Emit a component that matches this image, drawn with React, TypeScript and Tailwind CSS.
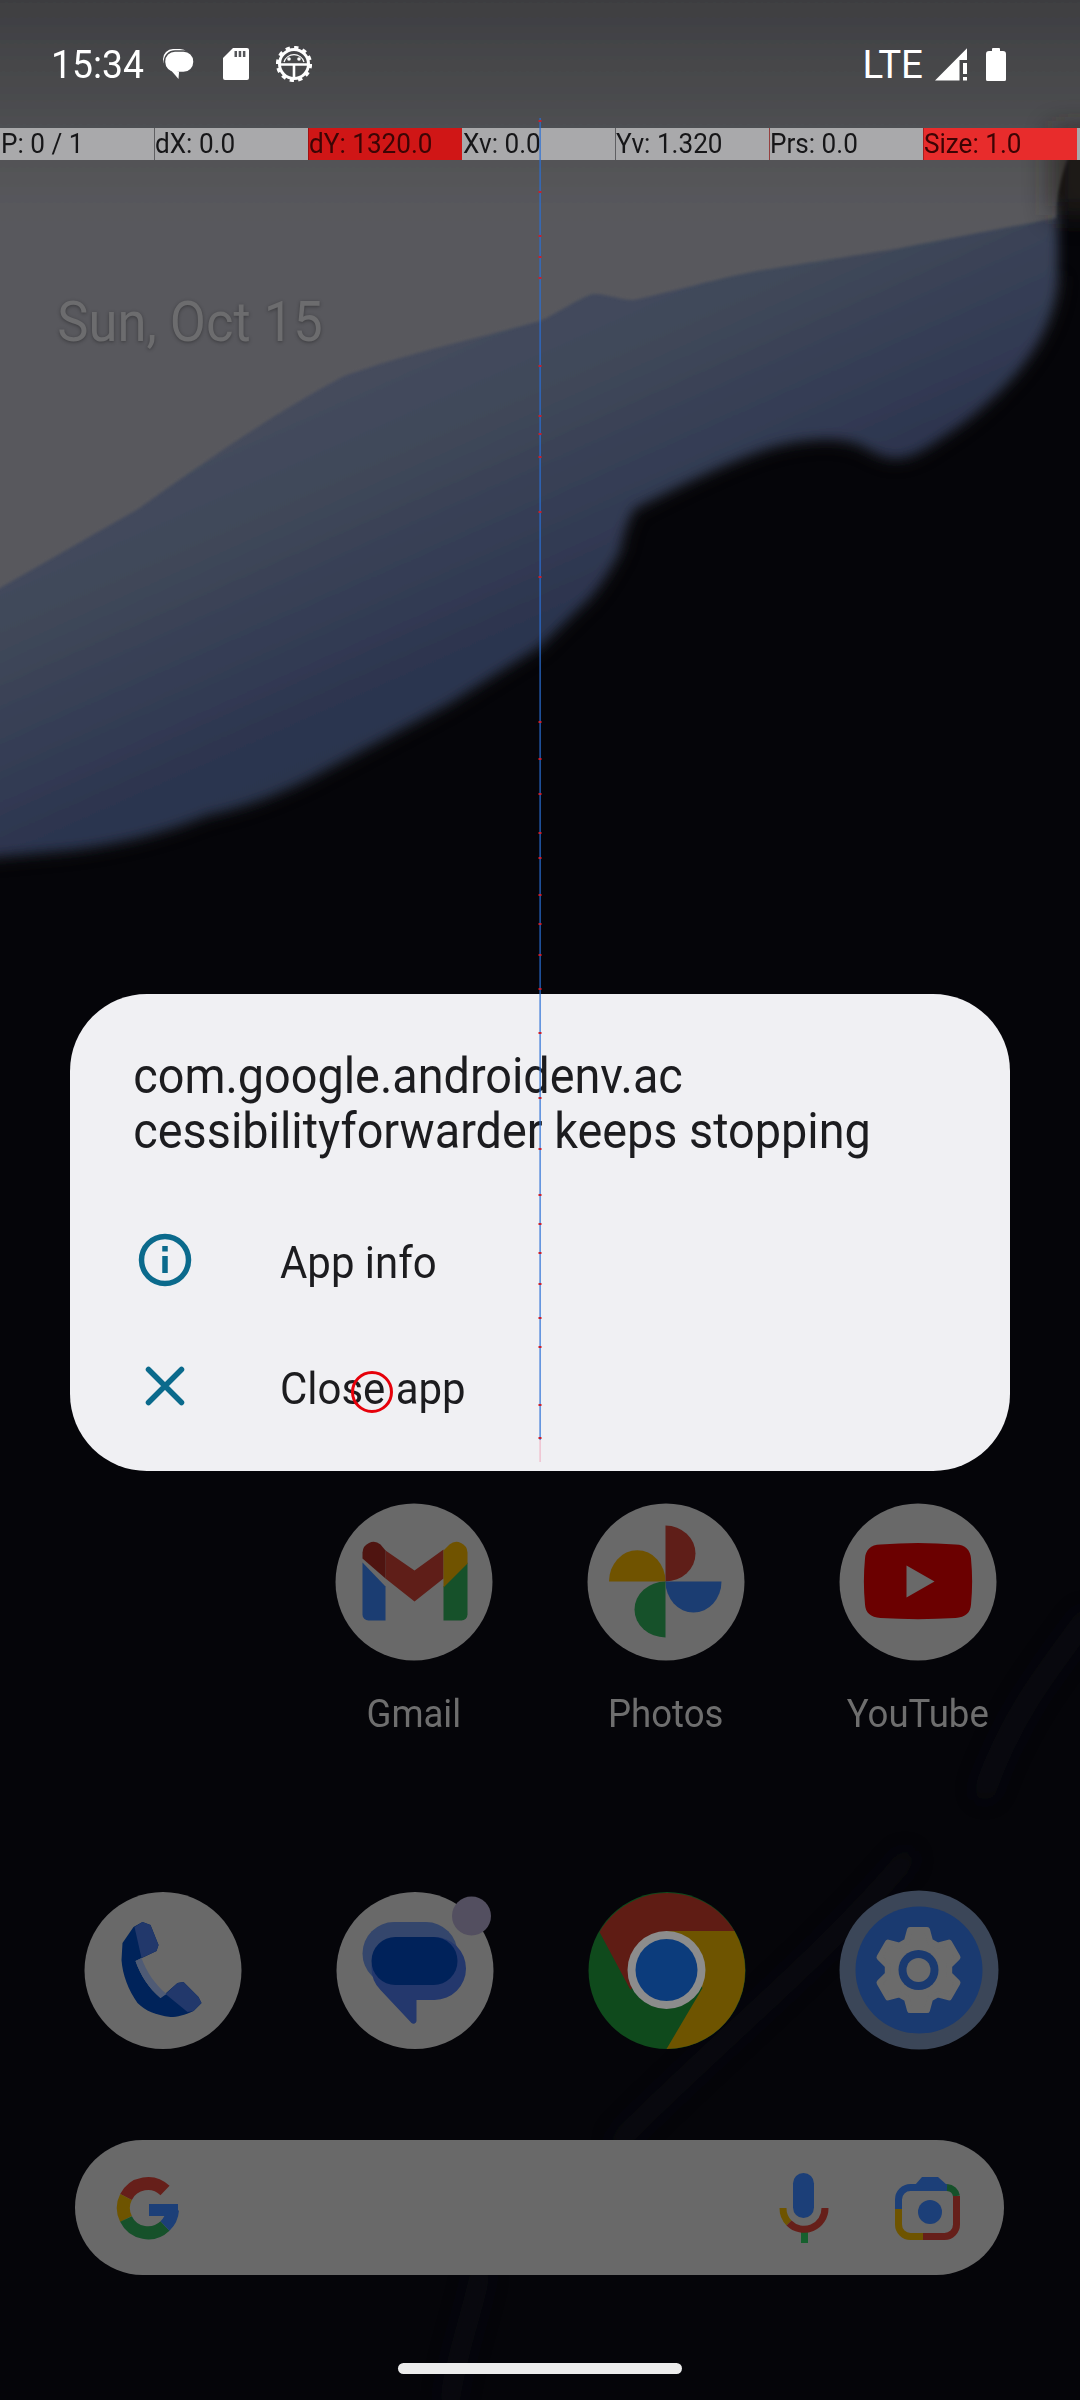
import React from "react";

const bar = [
  { t: "P: 0 / 1", c: "bg-[#a9a9ab]", line: "border-[#a9a9ab]", txt: "text-[#161618]" },
  { t: "dX: 0.0", c: "bg-[#a9a9ab]", line: "border-[#5f5f62]", txt: "text-[#161618]" },
  { t: "dY: 1320.0", c: "bg-[#d01616]", line: "border-[#a01010]", txt: "text-[#3c0505]" },
  { t: "Xv: 0.0", c: "bg-[#a9a9ab]", line: "border-[#a9a9ab]", txt: "text-[#161618]" },
  { t: "Yv: 1.320", c: "bg-[#a9a9ab]", line: "border-[#5f5f62]", txt: "text-[#161618]" },
  { t: "Prs: 0.0", c: "bg-[#a9a9ab]", line: "border-[#96403f]", txt: "text-[#161618]" },
  { t: "Size: 1.0", c: "bg-[#e82c2c]", line: "border-[#a82020]", txt: "text-[#3c0404]" },
];

const ticks = [
  120, 191, 235, 256, 277, 365, 415, 433, 456, 511, 576, 721, 758, 793, 832, 857, 894, 923, 954, 988,
  1032, 1097, 1148, 1194, 1223, 1252, 1283, 1317, 1346, 1404, 1437,
];

function gearPath(cx: number, cy: number, ro: number, ri: number, a1: number, a2: number) {
  let d = "";
  for (let k = 0; k < 6; k++) {
    const a = ((k * 60 - 90) * Math.PI) / 180;
    const p = (r: number, da: number) => {
      const t = a + (da * Math.PI) / 180;
      return `${(cx + r * Math.cos(t)).toFixed(1)} ${(cy + r * Math.sin(t)).toFixed(1)}`;
    };
    d += `${k === 0 ? "M" : "L"}${p(ri, -a2)} L${p(ro, -a1)} L${p(ro, a1)} L${p(ri, a2)} `;
  }
  return d + "Z";
}

function Wallpaper() {
  const region = { filterUnits: "userSpaceOnUse" as const, x: -100, y: -100, width: 1300, height: 2600 };
  const lower =
    "C1056 330 1020 380 960 425 C930 445 915 458 895 458 C880 458 870 448 855 443 C835 437 810 438 780 445 C750 452 690 480 634 509 C625 525 622 540 620 551 C605 580 590 600 578 609 L540 646 L448 704 L310 778 C270 798 240 808 207 815 C160 835 110 845 69 850 L-20 858";
  return (
    <svg className="absolute inset-0" width="1080" height="2400" viewBox="0 0 1080 2400">
      <defs>
        <linearGradient id="sky" gradientUnits="userSpaceOnUse" x1="0" y1="0" x2="0" y2="260">
          <stop offset="0" stopColor="#3e3e41" />
          <stop offset="0.5" stopColor="#4e4f52" />
          <stop offset="0.8" stopColor="#58585c" />
          <stop offset="1" stopColor="#59595d" />
        </linearGradient>
        <linearGradient id="blue" gradientUnits="userSpaceOnUse" x1="500" y1="200" x2="684" y2="611">
          <stop offset="0" stopColor="#4a5060" />
          <stop offset="0.45" stopColor="#3f4759" />
          <stop offset="0.85" stopColor="#2d3650" />
          <stop offset="1" stopColor="#2a344e" />
        </linearGradient>
        <filter id="b2" {...region}><feGaussianBlur stdDeviation="1.5" /></filter>
        <filter id="b6" {...region}><feGaussianBlur stdDeviation="6" /></filter>
        <filter id="b8" {...region}><feGaussianBlur stdDeviation="8" /></filter>
        <filter id="b10" {...region}><feGaussianBlur stdDeviation="10" /></filter>
        <filter id="b14" {...region}><feGaussianBlur stdDeviation="14" /></filter>
      </defs>
      <rect width="1080" height="2400" fill="#050509" />
      <path
        d={`M1058 276 ${lower}`}
        fill="none"
        stroke="#2a2620"
        strokeWidth="12"
        filter="url(#b8)"
        opacity="0.3"
      />
      <path d={`M-20 200 H1058 V276 ${lower} Z`} fill="url(#blue)" filter="url(#b6)" />
      <path
        d="M-20 -20 H1100 V110 C1075 135 1058 170 1056 218 L895 249 L757 271 C720 278 670 292 634 300 C620 300 605 293 592 294 C575 300 560 312 540 321 C470 340 400 355 344 376 C270 415 200 465 138 509 L0 588 L-20 600 Z"
        fill="url(#sky)"
        filter="url(#b2)"
      />
      <path d="M1052 130 H1120 V215 H1052 Z" fill="#26241f" filter="url(#b14)" opacity="0.75" />
      <g fill="none" stroke="#0a0f1e" strokeLinecap="round" filter="url(#b10)" opacity="0.4">
        <path d="M1085 1620 C1040 1680 1010 1720 985 1790" strokeWidth="22" />
        <path d="M905 1860 C830 1950 720 2040 620 2140" strokeWidth="20" />
        <path d="M480 2275 C470 2320 455 2360 450 2400" strokeWidth="20" />
      </g>
    </svg>
  );
}

function MsgIcon() {
  return (
    <svg width="32" height="32" viewBox="161 50 32 32">
      <rect x="162" y="51" width="27" height="20" rx="10" fill="#ffffff" />
      <rect x="163.5" y="53" width="29.5" height="21.5" rx="10.5" fill="#ffffff" stroke="#47484b" strokeWidth="1.5" />
      <path d="M168 70 L177.5 81 L178 74 Z" fill="#ffffff" />
    </svg>
  );
}

function SdIcon() {
  return (
    <svg width="26" height="32" viewBox="222 49 26 32">
      <path d="M232 49 H246 a2 2 0 0 1 2 2 V79 a2 2 0 0 1 -2 2 H224 a2 2 0 0 1 -2 -2 V59 Z" fill="#ffffff" />
      <path d="M233.5 52 h2.5 v6 h-2.5 Z M237.7 52 h2.5 v6 h-2.5 Z M241.9 52 h2.5 v6 h-2.5 Z" fill="#55565a" />
    </svg>
  );
}

function BugGear() {
  return (
    <svg width="36" height="36" viewBox="275 47 36 36">
      <circle cx="293" cy="65" r="14.5" fill="none" stroke="#ffffff" strokeWidth="3" />
      <circle cx="293" cy="65" r="16.5" fill="none" stroke="#ffffff" strokeWidth="3.2" strokeDasharray="4.3 4.3" />
      <path d="M279 65.5 H307 M293 65.5 V80" stroke="#ffffff" strokeWidth="2.6" fill="none" />
      <path d="M283 63 A10.5 10.5 0 0 1 303 63" fill="none" stroke="#ffffff" strokeWidth="1.2" />
      <circle cx="288" cy="60" r="1.8" fill="#ffffff" />
      <circle cx="298" cy="60" r="1.8" fill="#ffffff" />
    </svg>
  );
}

function Signal() {
  return (
    <svg width="33" height="33" viewBox="935 47 33 33">
      <path d="M935 79.5 L967 47.3 V59 H959.5 V79.5 Z" fill="#ffffff" />
      <path d="M963 62 h4 v11 h-4 Z M963 76 h4 v3.5 h-4 Z" fill="#ffffff" />
    </svg>
  );
}

function Battery() {
  return (
    <svg width="20" height="33" viewBox="986 47 20 33">
      <path d="M992 50 V48 a1 1 0 0 1 1 -1 h6 a1 1 0 0 1 1 1 V50 H1003 a3 3 0 0 1 3 3 V78.5 a1.5 1.5 0 0 1 -1.5 1.5 H987.5 a1.5 1.5 0 0 1 -1.5 -1.5 V53 a3 3 0 0 1 3 -3 Z" fill="#ffffff" />
    </svg>
  );
}

function Circle({ cx, cy }: { cx: number; cy: number }) {
  return <circle cx={cx} cy={cy} r="78.5" fill="#696969" />;
}

function Gmail() {
  return (
    <svg width="160" height="160" viewBox="333.5 1501.5 160 160">
      <Circle cx={413.5} cy={1581.5} />
      <path d="M362 1562 L385 1586 V1620 H368 a6 6 0 0 1 -6 -6 Z" fill="#1b3d72" />
      <path d="M467 1562 L443 1586 V1620 H461 a6 6 0 0 0 6 -6 Z" fill="#16512a" />
      <path d="M385 1550 L414 1570 L443 1549 V1578 L414 1601 L385 1578 Z" fill="#5f1e18" />
      <path d="M362 1552 a11 11 0 0 1 18 -8 L385 1550 V1578 L362 1558 Z" fill="#4f1410" />
      <path d="M443 1550 L449 1544 a11 11 0 0 1 18 8 V1563 L443 1587 Z" fill="#705300" />
    </svg>
  );
}

function Photos() {
  return (
    <svg width="160" height="160" viewBox="585.5 1501.5 160 160">
      <Circle cx={665.5} cy={1581.5} />
      <path d="M665 1525 A30 28 0 0 1 665 1581 Z" fill="#5f1e18" />
      <path d="M608.5 1581 A28 31 0 0 1 665 1581 Z" fill="#705300" />
      <path d="M665 1581 H721 A28 31 0 0 1 665 1581 Z" fill="#1b3d72" />
      <path d="M665 1581 V1637 A31 28 0 0 1 665 1581 Z" fill="#16512a" />
    </svg>
  );
}

function YouTube() {
  return (
    <svg width="160" height="160" viewBox="837.5 1501.5 160 160">
      <Circle cx={917.5} cy={1581.5} />
      <path d="M880 1544 C905 1542 930 1542 955 1544 C965 1544 970 1550 970.5 1558 C972 1574 972 1588 970.5 1604 C970 1612 965 1617 955 1617.5 C930 1619 905 1619 880 1617.5 C870 1617 865 1612 864.5 1604 C863 1588 863 1574 864.5 1558 C865 1550 870 1544 880 1544 Z" fill="#6b0000" />
      <path d="M906 1565 L934 1581 L906 1597 Z" fill="#696969" />
    </svg>
  );
}

function Phone() {
  return (
    <svg width="160" height="160" viewBox="82.5 1890 160 160">
      <circle cx="162.5" cy="1970.5" r="78.5" fill="#696969" />
      <path d="M133 1927 L142 1922 L150 1925 L158 1945 L156 1951 L135 1961 C140 1975 148 1988 160 1998 L177 1983 L183 1982 L198 1997 L201 2003 L193 2011 C184 2015 177 2017 170 2017 C155 2015 145 2011 137 2003 C128 1990 122 1975 121 1960 L122 1943 Z" fill="#00235a" />
      <path d="M134 1927 L142 1922 L150 1925 L158 1945 L156 1951 L141 1958 Z" fill="#22386b" />
      <path d="M165 1994 L177 1983 L183 1982 L198 1997 L201 2003 L193 2011 L187 2012 Z" fill="#22386b" />
      <path d="M135 1961 L141 1958 C146 1972 155 1985 166 1994 L160 1998 C148 1988 140 1975 135 1961 Z" fill="#4f5b75" />
    </svg>
  );
}

function Messages() {
  return (
    <svg width="160" height="160" viewBox="334.5 1890 160 160" className="overflow-visible">
      <circle cx="414.5" cy="1970.5" r="78.5" fill="#696969" />
      <rect x="362" y="1922" width="95" height="63" rx="31.5" fill="#34466c" />
      <path d="M402 1937 H434 A31.5 31.5 0 0 1 434 2000 H416 V2021 a3 3 0 0 1 -5 2 L380 1990 A31 31 0 0 1 371 1968 A31 31 0 0 1 402 1937 Z" fill="#24386d" />
      <path d="M395 1937 H433 A24 24 0 0 1 457 1961 A24 24 0 0 1 433 1985 H395 A24 24 0 0 1 395 1937 Z" fill="#00225a" />
      <circle cx="471" cy="1916" r="19.5" fill="#534f60" />
    </svg>
  );
}

function Chrome() {
  return (
    <svg width="160" height="160" viewBox="586.5 1890 160 160">
      <circle cx="666.5" cy="1970.5" r="78.5" fill="#0f4a1c" />
      <path d="M599 1932 A78.5 78.5 0 0 1 734 1931 L666 1931 L630 1990 Z" fill="#5f1c14" />
      <path d="M734 1931 A78.5 78.5 0 0 1 666 2049 L702 1988 L666 1931 Z" fill="#6e5400" />
      <circle cx="666" cy="1970" r="39" fill="#8c8c8c" />
      <circle cx="666" cy="1970" r="31" fill="#0c3c7c" />
    </svg>
  );
}

function Settings() {
  return (
    <svg width="160" height="160" viewBox="838.5 1890 160 160">
      <circle cx="918.5" cy="1970" r="79.5" fill="#3b4658" />
      <circle cx="918.5" cy="1970" r="63.5" fill="#1a3a70" />
      <path d={gearPath(918, 1970, 41, 31, 12, 22)} fill="#6b6b6b" stroke="#6b6b6b" strokeWidth="6" strokeLinejoin="round" />
      <circle cx="918" cy="1970" r="20" fill="#1a3a70" />
      <circle cx="918" cy="1970" r="12" fill="#6b6b6b" />
    </svg>
  );
}

function GoogleG() {
  return (
    <svg width="68" height="68" viewBox="114 2172 68 68" fill="none" strokeWidth="13">
      <path d="M165 2188.5 A24.5 24.5 0 0 0 126 2195" stroke="#661f1a" />
      <path d="M126 2195 A24.5 24.5 0 0 0 126 2217" stroke="#6e5400" />
      <path d="M126 2217 A24.5 24.5 0 0 0 165 2224" stroke="#16512a" />
      <path d="M165 2224 A24.5 24.5 0 0 0 172.5 2208" stroke="#1c3f78" />
      <rect x="149" y="2202" width="29" height="12" fill="#1c3f78" stroke="none" />
    </svg>
  );
}

function Mic() {
  return (
    <svg width="56" height="76" viewBox="776 2170 56 76" fill="none">
      <rect x="793" y="2173" width="21" height="45" rx="10.5" fill="#1c3f78" />
      <rect x="801" y="2232" width="7" height="11" fill="#16602e" />
      <path d="M783 2208 A21 21 0 0 0 789 2223" stroke="#6e5400" strokeWidth="7" />
      <path d="M789 2223 A21 21 0 0 0 825 2208" stroke="#661f1a" strokeWidth="7" />
    </svg>
  );
}

function Lens() {
  return (
    <svg width="72" height="70" viewBox="892 2172 72 70" fill="none" strokeWidth="7">
      <path d="M915 2184 L922 2176 H938 L947 2184 V2188 H915 Z" fill="#1c3f78" />
      <path d="M898.5 2208 V2198.5 A12 12 0 0 1 910.5 2186.5 H947" stroke="#1c3f78" />
      <path d="M947 2186.5 A10 10 0 0 1 956.5 2195" stroke="#16512a" />
      <path d="M956.5 2195 V2223.5 A12 12 0 0 1 944.5 2235.5 H923" stroke="#661f1a" />
      <path d="M923 2235.5 H910.5 A12 12 0 0 1 898.5 2223.5 V2208" stroke="#6e5400" />
      <circle cx="930" cy="2211" r="12" fill="#1c3f78" />
    </svg>
  );
}

function InfoIcon() {
  return (
    <svg width="66" height="66" viewBox="0 0 66 66" fill="none" stroke="#0b6a8c">
      <circle cx="33" cy="33" r="23.5" strokeWidth="5.5" />
      <path d="M33 29 V46" strokeWidth="5.5" />
      <path d="M33 19 V24.5" strokeWidth="5.5" />
    </svg>
  );
}

function CloseIcon() {
  return (
    <svg width="66" height="66" viewBox="0 0 66 66" fill="none" stroke="#0b6a8c">
      <path d="M16.5 16.5 L49.5 49.5 M49.5 16.5 L16.5 49.5" strokeWidth="5.5" strokeLinecap="round" />
    </svg>
  );
}

export default function App() {
  return (
    <div className="relative w-[1080px] h-[2400px] overflow-hidden bg-[#050509] font-['Roboto',sans-serif]">
      <Wallpaper />

      <div className="relative flex flex-col h-full">
        <div className="h-[128px] flex items-center pl-[51px] pr-[74px] text-white">
          <span className="text-[38.5px] leading-none w-[111px] pt-[2px] origin-left scale-x-[0.97]">15:34</span>
          <MsgIcon />
          <div className="ml-[29px]"><SdIcon /></div>
          <div className="ml-[27px]"><BugGear /></div>
          <span className="ml-auto text-[38.5px] leading-none pt-[3px]">LTE</span>
          <div className="ml-[12px]"><Signal /></div>
          <div className="ml-[18px]"><Battery /></div>
        </div>

        <div className="flex h-[32px] bg-[#a9a9ab]">
          {bar.map((b) => (
            <div
              key={b.t}
              className={`w-[153.86px] border-l text-[27.5px] leading-[32px] whitespace-nowrap overflow-hidden ${b.c} ${b.line} ${b.txt}`}
            >
              <span className="block origin-left scale-x-[0.95]">{b.t}</span>
            </div>
          ))}
        </div>

        <div className="mt-[134px] pl-[60px] text-[55px] leading-[56px] text-[#6c6c6e] [text-shadow:0_1px_4px_rgba(0,0,0,0.35)] origin-left scale-x-[0.955]">
          Sun, Oct 15
        </div>

        <div className="mt-auto">
          <div className="grid grid-cols-[repeat(4,252px)] pl-[35.5px]">
            <div />
            {[
              { n: "Gmail", I: Gmail },
              { n: "Photos", I: Photos },
              { n: "YouTube", I: YouTube },
            ].map(({ n, I }) => (
              <div key={n} className="flex flex-col items-center">
                <I />
                <span className="mt-[27.5px] text-[38.5px] leading-[50px] text-[#6e6e6e] scale-x-[0.95]">{n}</span>
              </div>
            ))}
          </div>

          <div className="mt-[151px] grid grid-cols-[repeat(4,252px)] pl-[36.5px]">
            {[Phone, Messages, Chrome, Settings].map((I, i) => (
              <div key={i} className="flex justify-center">
                <I />
              </div>
            ))}
          </div>

          <div className="mt-[90px] mx-[75px] w-[929px] h-[135px] rounded-full bg-[#696969] flex items-center pl-[39px] pr-[40px]">
            <GoogleG />
            <div className="ml-auto"><Mic /></div>
            <div className="ml-[60px]"><Lens /></div>
          </div>

          <div className="mt-[88px] mb-[26px] mx-auto w-[284px] h-[11px] rounded-full bg-[#ececec]" />
        </div>
      </div>

      <div className="absolute left-[70px] top-[994px] w-[940px] h-[477px] rounded-[77px] bg-[#f0f0f3] text-[#1c1c1f]">
        <div className="pt-[55px] pl-[67px] text-[49.5px] leading-[55px] origin-left scale-x-[0.945]">
          <div>com.google.androidenv.ac</div>
          <div>cessibilityforwarder keeps stopping</div>
        </div>
        <div className="mt-[38px]">
          <div className="h-[126px] flex items-center pl-[62px] gap-[82px]">
            <InfoIcon />
            <span className="text-[44px] leading-none pt-[6px] origin-left scale-x-[0.953]">App info</span>
          </div>
          <div className="h-[126px] flex items-center pl-[62px] gap-[82px]">
            <CloseIcon />
            <span className="text-[44px] leading-none pt-[6px] origin-left scale-x-[0.953]">Close app</span>
          </div>
        </div>
      </div>

      <svg className="absolute inset-0 pointer-events-none" width="1080" height="2400" viewBox="0 0 1080 2400" fill="none">
        <rect x="539.5" y="118" width="1.2" height="1322" fill="#2a6fd6" />
        <rect x="539.5" y="1440" width="1.2" height="22" fill="#efb6c6" />
        {ticks.map((y) => (
          <rect key={y} x="538.5" y={y} width="3" height="2" fill="#c8202e" />
        ))}
        <circle cx="372" cy="1392" r="19.5" stroke="#e6000a" strokeWidth="3" />
      </svg>
    </div>
  );
}
